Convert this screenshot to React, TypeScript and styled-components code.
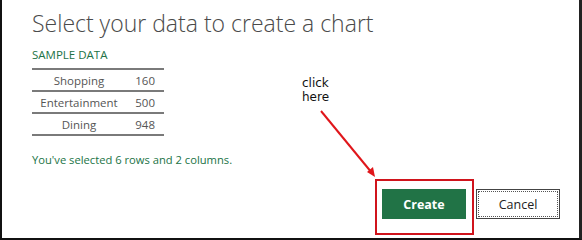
import React from 'react'
import styled, { createGlobalStyle } from 'styled-components';

const GlobalStyle = createGlobalStyle`
  html, body {
    margin: 0;
    padding: 0;
    background: #fff;
  }
  * {
    box-sizing: border-box;
  }
`

interface Row {
    label: string;
    value: number;
}

const rows: Row[] = [
    { label: 'Shopping', value: 160 },
    { label: 'Entertainment', value: 500 },
    { label: 'Dining', value: 948 },
];

const ArrowNote = () => (
    <Note>
      <NoteText>click<br />here</NoteText>
      <ArrowSvg width="70" height="80" viewBox="0 0 70 80">
        <line x1="3" y1="2" x2="54" y2="64" stroke="#e0161b" strokeWidth="2" />
        <polygon points="57,68 49,63 55,58" fill="#e0161b" />
      </ArrowSvg>
    </Note>
)

const App: React.FC = () => {
    return (
        <>
        <GlobalStyle />
        <Dialog>
          <Title>Select your data to create a chart</Title>
          <SectionLabel>SAMPLE DATA</SectionLabel>
          <DataTable>
            <tbody>
              {rows.map((r) => (
                <tr key={r.label}>
                  <LabelCell>{r.label}</LabelCell>
                  <ValueCell>{r.value}</ValueCell>
                </tr>
              ))}
            </tbody>
          </DataTable>
          <Status>You've selected 6 rows and 2 columns.</Status>
          <Footer>
            <Highlight>
              <PrimaryButton>Create</PrimaryButton>
            </Highlight>
            <SecondaryButton>Cancel</SecondaryButton>
          </Footer>
          <ArrowNote />
        </Dialog>
        </>
    )
}

export default App

const Dialog = styled.div`
  position: relative;
  width: 582px;
  height: 240px;
  display: flex;
  flex-direction: column;
  align-items: flex-start;
  padding: 0 19px 0 30px;
  border-left: 2px solid #111;
  border-right: 3px solid #222;
  border-bottom: 2px solid #111;
  background: #fff;
  font-family: "Open Sans", "Liberation Sans", sans-serif;
`

const Title = styled.h1`
  margin: 8px 0 0;
  font-size: 23px;
  font-weight: 300;
  line-height: 31px;
  color: #4a4a4a;
`

const SectionLabel = styled.div`
  margin-top: 8px;
  font-size: 11.5px;
  line-height: 16px;
  color: #217346;
`

const DataTable = styled.table`
  margin-top: 5px;
  width: 132px;
  border-collapse: collapse;
  border-top: 2px solid #7a7a7a;
  font-size: 11.5px;
  color: #555;
  tr {
    height: 22px;
    border-bottom: 2px solid #7a7a7a;
  }
`

const LabelCell = styled.td`
  text-align: center;
  padding: 0 0 0 2px;
`

const ValueCell = styled.td`
  text-align: right;
  padding: 0 9px 0 0;
  width: 40px;
`

const Status = styled.div`
  margin-top: 17px;
  font-size: 11.2px;
  line-height: 14px;
  color: #217346;
`

const Footer = styled.div`
  margin-top: auto;
  align-self: flex-end;
  display: flex;
  gap: 10px;
  padding-bottom: 19px;
`

const Highlight = styled.div`
  position: relative;
  display: flex;
  &::after {
    content: '';
    position: absolute;
    inset: -10px -8px -16px -7px;
    border: 2px solid #d0141c;
    pointer-events: none;
  }
`

const PrimaryButton = styled.button`
  width: 84px;
  height: 30px;
  border: none;
  background: #217346;
  color: #fff;
  font-family: "Open Sans", "Liberation Sans", sans-serif;
  font-weight: 700;
  font-size: 12.5px;
`

const SecondaryButton = styled.button`
  width: 84px;
  height: 30px;
  border: 1px solid #444;
  outline: 1px dotted #555;
  outline-offset: -3px;
  background: #fff;
  color: #222;
  font-family: "Open Sans", "Liberation Sans", sans-serif;
  font-size: 12.5px;
`

const Note = styled.div`
  position: absolute;
  left: 298px;
  top: 76px;
  display: flex;
  flex-direction: column;
  align-items: flex-start;
`

const NoteText = styled.div`
  font-family: "DejaVu Sans", Verdana, sans-serif;
  font-size: 12px;
  line-height: 14px;
  color: #111;
  margin-left: 2px;
  margin-bottom: 5px;
`

const ArrowSvg = styled.svg`
  margin-left: 18px;
`
